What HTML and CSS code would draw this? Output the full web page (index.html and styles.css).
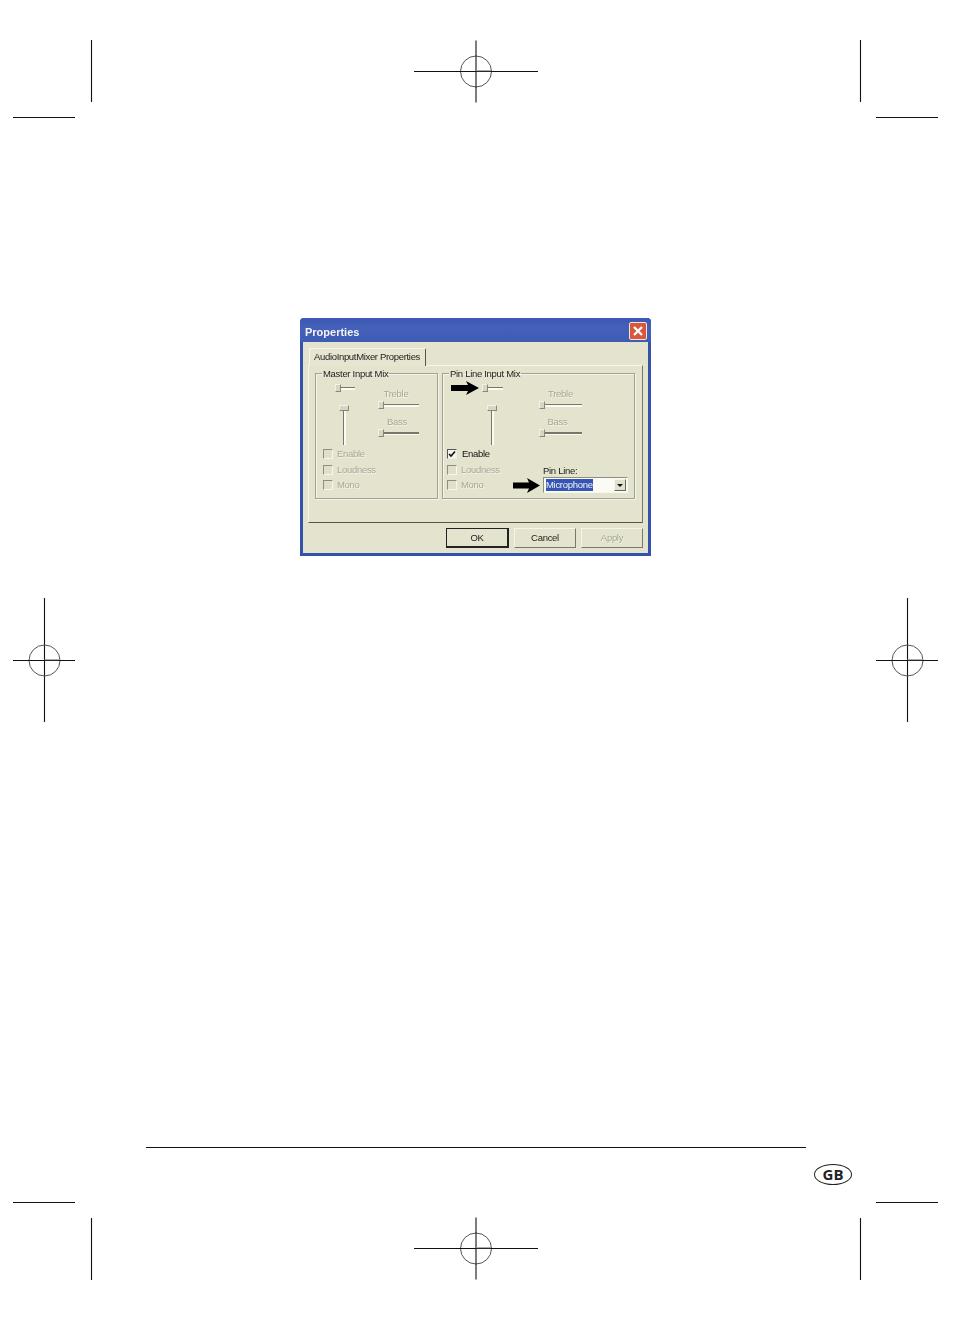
FILE: index.html
```html
<!DOCTYPE html>
<html lang="en">
<head>
<meta charset="utf-8">
<title>Properties</title>
<link rel="stylesheet" href="styles.css">
</head>
<body>
<div class="sheet">
  <svg class="marks" width="953" height="1319" viewBox="0 0 953 1319">
    <defs>
      <g id="target">
        <circle cx="0" cy="0" r="15.5" class="ring"/>
        <line x1="-62" y1="0" x2="62" y2="0" class="cut"/>
        <line x1="0" y1="-31" x2="0" y2="31" class="cut"/>
        <line x1="0" y1="-0.8" x2="15" y2="-0.8" class="tick"/>
      </g>
    </defs>
    <line x1="91.5" y1="40" x2="91.5" y2="102" class="cut"/>
    <line x1="13" y1="117.5" x2="75" y2="117.5" class="cut"/>
    <line x1="860.5" y1="40" x2="860.5" y2="102" class="cut"/>
    <line x1="876" y1="117.5" x2="938" y2="117.5" class="cut"/>
    <line x1="91.5" y1="1218" x2="91.5" y2="1280" class="cut"/>
    <line x1="13" y1="1202.5" x2="75" y2="1202.5" class="cut"/>
    <line x1="860.5" y1="1218" x2="860.5" y2="1280" class="cut"/>
    <line x1="876" y1="1202.5" x2="938" y2="1202.5" class="cut"/>
    <line x1="146" y1="1147.5" x2="806" y2="1147.5" class="cut"/>
    <use href="#target" x="476" y="71.5"/>
    <use href="#target" x="476" y="1248.5"/>
    <line x1="44.5" y1="598" x2="44.5" y2="722" class="cut"/>
    <line x1="907.5" y1="598" x2="907.5" y2="722" class="cut"/>
    <circle cx="44.5" cy="660.5" r="15.5" class="ring"/>
    <line x1="13" y1="660.5" x2="75" y2="660.5" class="cut"/>
    <line x1="44.5" y1="659.7" x2="60" y2="659.7" class="tick"/>
    <circle cx="907.5" cy="660.5" r="15.5" class="ring"/>
    <line x1="876" y1="660.5" x2="938" y2="660.5" class="cut"/>
    <line x1="907.5" y1="659.7" x2="923" y2="659.7" class="tick"/>
  </svg>

  <div class="dialog">
    <div class="titlebar">
      <span class="title">Properties</span>
      <span class="close">
        <svg width="12" height="12" viewBox="0 0 12 12"><path d="M2 2 L10 10 M10 2 L2 10" class="close-x"/></svg>
      </span>
    </div>
    <div class="tabs"><div class="tab">AudioInputMixer Properties</div></div>
    <div class="panel">
      <div class="groups">
        <fieldset class="group group-master">
          <legend>Master Input Mix</legend>
          <div class="mix">
            <div class="col-left">
              <div class="hslider top-slider"><i class="thumb"></i><i class="track"></i></div>
              <div class="vslider"><i class="vthumb"></i><i class="vtrack"></i></div>
              <div class="checks">
                <div class="check"><i class="box"></i><span class="off">Enable</span></div>
                <div class="check"><i class="box"></i><span class="off">Loudness</span></div>
                <div class="check"><i class="box"></i><span class="off">Mono</span></div>
              </div>
            </div>
            <div class="col-right">
              <div class="off slider-label">Treble</div>
              <div class="hslider wide"><i class="thumb"></i><i class="track"></i></div>
              <div class="off slider-label second">Bass</div>
              <div class="hslider wide"><i class="thumb"></i><i class="track"></i></div>
            </div>
          </div>
        </fieldset>
        <fieldset class="group group-pin">
          <legend>Pin Line Input Mix</legend>
          <div class="mix">
            <div class="col-left">
              <div class="top-row">
                <svg class="arrow" width="28" height="14" viewBox="0 0 28 14"><path d="M0 4 H17 L15 0 L28 7 L15 14 L17 10 H0 Z"/></svg>
                <div class="hslider top-slider"><i class="thumb"></i><i class="track"></i></div>
              </div>
              <div class="vslider"><i class="vthumb"></i><i class="vtrack"></i></div>
              <div class="checks">
                <div class="check"><i class="box box-on"><svg width="8" height="8" viewBox="0 0 8 8"><path d="M1 4 L3 6 L7 1.5" class="tickmark"/></svg></i><span class="on">Enable</span></div>
                <div class="check"><i class="box"></i><span class="off">Loudness</span></div>
                <div class="check"><i class="box"></i><span class="off">Mono</span></div>
              </div>
            </div>
            <div class="col-right">
              <div class="off slider-label">Treble</div>
              <div class="hslider wide"><i class="thumb"></i><i class="track"></i></div>
              <div class="off slider-label second">Bass</div>
              <div class="hslider wide"><i class="thumb"></i><i class="track"></i></div>
              <div class="pin-label">Pin Line:</div>
              <div class="combo-row">
                <svg class="arrow" width="27" height="15" viewBox="0 0 27 15"><path d="M0 4.5 H16 L14 0 L27 7.5 L14 15 L16 10.5 H0 Z"/></svg>
                <div class="combo">
                  <span class="combo-value">Microphone</span>
                  <span class="combo-btn"><i class="caret"></i></span>
                </div>
              </div>
            </div>
          </div>
        </fieldset>
      </div>
    </div>
    <div class="footer">
      <div class="btn btn-default">OK</div>
      <div class="btn">Cancel</div>
      <div class="btn btn-off">Apply</div>
    </div>
  </div>

  <div class="badge">GB</div>
</div>
</body>
</html>
```
FILE: styles.css
```css
html, body { margin: 0; padding: 0; background: #fff; }
.sheet { position: relative; width: 953px; height: 1319px; overflow: hidden; background: #fff; }
.marks { position: absolute; left: 0; top: 0; }
.cut { stroke: #111; stroke-width: 1.1; }
.ring { fill: none; stroke: #555; stroke-width: 1; }
.tick { stroke: #999; stroke-width: 1; }

.dialog {
  position: absolute; left: 300px; top: 318px;
  width: 351px; height: 238px; box-sizing: border-box;
  background: #e4e3cd;
  border: 3px solid #3353ab; border-top: 0;
  border-radius: 4px 4px 0 0;
  font: 9.5px/12px "Liberation Sans", sans-serif;
  letter-spacing: -0.3px;
  color: #222;
  filter: blur(0.4px);
  display: flex; flex-direction: column;
}
.titlebar {
  height: 24px; margin: 0 -3px; padding: 0 4px 0 5px; flex: none;
  display: flex; align-items: center; justify-content: space-between;
  background: linear-gradient(#3a58b4, #4460b8 40%, #3f5cb4);
  border-radius: 4px 4px 0 0;
}
.title { font-weight: 700; font-size: 11px; letter-spacing: 0; color: #f4f4f4; margin-top: 3px; }
.close {
  width: 16px; height: 16px; margin-top: 2px;
  border: 1px solid #f2e6dc; border-radius: 2px;
  background: #d9573a;
  display: flex; align-items: center; justify-content: center;
}
.close-x { stroke: #fff; stroke-width: 2.4; fill: none; }

.tabs { margin: 6px 0 0 6px; height: 17px; flex: none; display: flex; }
.tab {
  width: 117px; box-sizing: border-box; padding: 2px 0 0 4px; height: 18px;
  background: #e6e5d0;
  border: 1px solid #f6f6ec; border-bottom: 0;
  border-right: 1px solid #55554a;
  border-radius: 2px 2px 0 0;
  position: relative; z-index: 1;
  white-space: nowrap;
  letter-spacing: -0.33px;
}
.panel {
  margin: 0 5px; height: 158px; flex: none; box-sizing: border-box;
  border: 1px solid #f6f6ec;
  border-right: 1px solid #77776a;
  border-bottom: 1px solid #55554a;
  padding: 0 0 0 6px;
}
.groups { display: flex; gap: 4px; }
.group {
  margin: 0; padding: 0; min-width: 0;
  height: 133px; box-sizing: border-box;
  border: 1px solid #a2a292;
  box-shadow: inset 1px 1px 0 #f4f4e8, 1px 1px 0 #f4f4e8;
}
.group-master { width: 123px; }
.group-pin { width: 193px; }
legend { padding: 2px 1px 0; margin-left: 6px; line-height: 12px; }

.mix { display: flex; height: 118px; }
.col-left { flex: none; box-sizing: border-box; padding: 4px 0 0 7px; }
.group-master .col-left { width: 62px; }
.group-pin .col-left { width: 96px; padding-left: 4px; }
.col-right { flex: none; padding-top: 8px; }
.group-pin .col-right { width: 92px; }

.hslider { display: flex; align-items: center; height: 8px; }
.thumb {
  display: block; width: 6px; height: 8px; box-sizing: border-box; flex: none;
  background: #d6d6c6; border: 1px solid #f2f2e6;
  border-right-color: #88887a; border-bottom-color: #88887a;
}
.track {
  display: block; flex: 1; height: 3px;
  background: linear-gradient(#77776a 50%, #fbfbf3 50%);
}
.top-slider { width: 20px; margin-left: 12px; }
.group-pin .top-slider { width: 21px; margin-left: 3px; }
.top-row { display: flex; align-items: center; height: 8px; padding-left: 4px; }
.wide { width: 41px; }
.group-pin .wide { width: 43px; }
.arrow { display: block; flex: none; }

.slider-label { width: 41px; height: 12px; margin-bottom: 1px; box-sizing: border-box; padding-right: 5px; text-align: center; }
.group-pin .slider-label { width: 43px; padding-right: 0; }
.slider-label.second { margin-top: 7px; padding-right: 3px; }
.group-pin .slider-label.second { padding-right: 6px; }

.vslider {
  width: 10px; height: 40px; margin: 13px 0 0 16px;
  display: flex; flex-direction: column; align-items: center;
}
.group-pin .vslider { margin-left: 40px; }
.vthumb {
  display: block; width: 10px; height: 6px; box-sizing: border-box; flex: none;
  background: #d6d6c6; border: 1px solid #f2f2e6;
  border-right-color: #88887a; border-bottom-color: #88887a;
}
.vtrack { display: block; width: 3px; flex: 1; background: linear-gradient(90deg, #77776a 50%, #fbfbf3 50%); }

.checks { margin-top: 4px; display: flex; flex-direction: column; gap: 5.5px; }
.check { display: flex; align-items: center; gap: 4px; height: 10px; white-space: nowrap; }
.box {
  display: flex; align-items: center; justify-content: center;
  width: 10px; height: 10px; box-sizing: border-box; flex: none;
  background: #e0dfc8; border: 1px solid #8e8e80;
  border-right-color: #f6f6ec; border-bottom-color: #f6f6ec;
}
.box-on { background: #f4f4ea; border-color: #555 #eee #eee #555; }
.tickmark { fill: none; stroke: #111; stroke-width: 1.6; }
.off { color: #a7a797; text-shadow: 0.6px 0.6px 0 #f6f6ea; }
.on { color: #111; margin-left: 1px; }

.pin-label { margin: 28px 0 0 4px; height: 12px; }
.combo-row { display: flex; align-items: center; margin-left: -26px; gap: 3px; height: 16px; }
.combo {
  width: 85px; height: 16px; box-sizing: border-box; flex: none;
  background: #fbfbf6; border: 1px solid #8d8d80;
  border-right-color: #f6f6ec; border-bottom-color: #f6f6ec;
  padding: 1px;
  display: flex; justify-content: space-between;
}
.combo-value { background: #3555b4; color: #f4f4f4; width: 47px; margin-left: 1px; height: 12px; white-space: nowrap; }
.combo-btn {
  width: 12px; height: 12px; box-sizing: border-box;
  background: #e2e1ce; border: 1px solid #f4f4ea;
  border-right-color: #66665a; border-bottom-color: #66665a;
  display: flex; align-items: center; justify-content: center;
}
.caret { display: block; width: 0; height: 0; border: 3px solid transparent; border-top: 3px solid #111; border-bottom: 0; }

.footer { display: flex; justify-content: flex-end; gap: 5px; padding: 5px 5px 0 0; }
.btn {
  width: 62px; height: 20px; box-sizing: border-box;
  border: 1px solid #f4f4ea;
  border-right-color: #77776a; border-bottom-color: #77776a;
  text-align: center; line-height: 18px; background: #e4e3cd;
}
.btn-default { width: 63px; border: 1px solid #222; border-right-width: 2px; border-bottom-width: 2px; line-height: 17px; }
.btn-off { color: #a7a797; text-shadow: 0.6px 0.6px 0 #f6f6ea; }

.badge {
  position: absolute; left: 814px; top: 1164px;
  width: 38px; height: 21px; box-sizing: border-box;
  border: 1.4px solid #222; border-radius: 50%;
  display: flex; align-items: center; justify-content: center;
  font: 700 15px/1 "Open Sans", sans-serif; color: #222;
}
```
